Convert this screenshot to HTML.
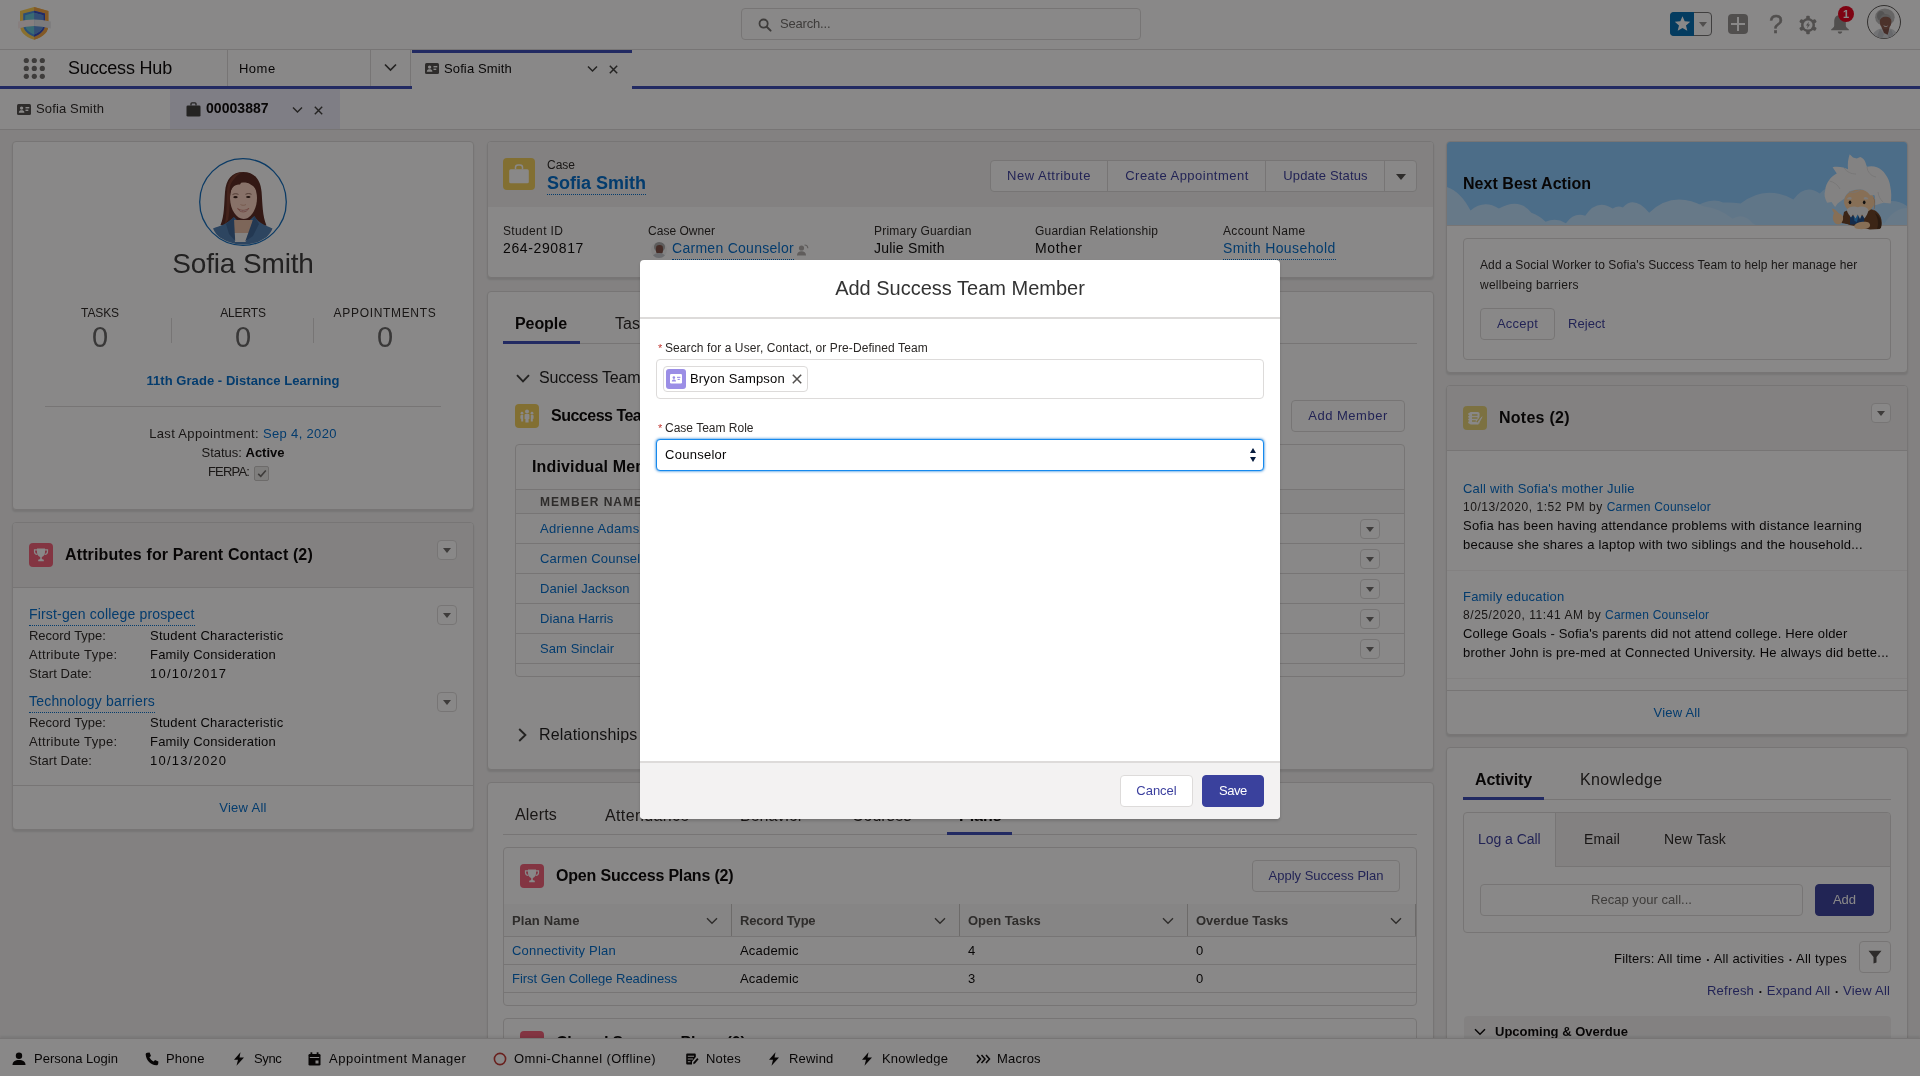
<!DOCTYPE html>
<html lang="en">
<head>
<meta charset="utf-8">
<title>Sofia Smith | Success Hub</title>
<style>
*{box-sizing:border-box;margin:0;padding:0}
html,body{width:1920px;height:1076px;overflow:hidden}
body{font-family:"Liberation Sans",sans-serif;font-size:13px;color:#080707;background:#f3f2f2;position:relative;line-height:1.2}
.a{position:absolute;white-space:nowrap}
.t{position:absolute;white-space:nowrap;line-height:1;transform:translateY(-50%);will-change:transform}
.lk{color:#006dcc}
.br{color:#3b3f9e}
.b{font-weight:bold}
.card{position:absolute;background:#fff;border:1px solid #dddbda;border-radius:4px;box-shadow:0 2px 2px rgba(0,0,0,.1)}
.hd{position:absolute;background:#f3f2f2}
.ln{position:absolute;background:#dddbda}
.btn{position:absolute;background:#fff;border:1px solid #dddbda;border-radius:4px;color:#3b3f9e;font-size:13px;text-align:center;white-space:nowrap;will-change:transform}
.dd{position:absolute;width:20px;height:20px;background:#fff;border:1px solid #dddbda;border-radius:4px}
.dd:after{content:"";position:absolute;left:5px;top:7px;border-left:4.5px solid transparent;border-right:4.5px solid transparent;border-top:5.5px solid #706e6b}
.ic{position:absolute;border-radius:4px}
.bu{font-size:8px;color:#080707;position:relative;top:-1.500px;margin:0 1px}
.dot{border-bottom:1px dotted #006dcc}
#ov{position:absolute;left:0;top:0;width:1920px;height:1076px;background:rgba(8,7,7,.48);z-index:50}
#modal{position:absolute;left:640px;top:260px;width:640px;height:559px;background:#fff;border-radius:4px;z-index:60;box-shadow:0 2px 3px rgba(0,0,0,.16)}
svg{position:absolute;overflow:visible}
</style>
</head>
<body>

<!-- ================= GLOBAL HEADER ================= -->
<div class="a" id="gh" style="left:0;top:0;width:1920px;height:50px;background:#fff;border-bottom:1px solid #dddbda"></div>
<svg style="left:18px;top:6px" width="33" height="35" viewBox="0 0 33 35">
  <path d="M16.100 0.900 L30.400 4.900 L30.400 19 C30.400 25.500 26.500 30.500 16.100 33.700 C5.700 30.500 2 25.500 2 19 L2 4.900 Z" fill="#ffd154"/>
  <path d="M16.100 0.900 L30.400 4.900 L30.400 19 C30.400 25.500 26.500 30.500 16.100 33.700 Z" fill="#f3a344"/>
  <path d="M16.100 4.700 L27 7.600 L27 19 C27 24.500 22 28.500 16.100 30.800 C10.200 28.500 5.200 24.500 5.200 19 L5.200 7.600 Z" fill="#4a90e0"/>
  <path d="M16.100 4.700 L27 7.600 L27 19 C27 24.500 22 28.500 16.100 30.800 Z" fill="#3a4bc0"/>
  <path d="M16.100 6.700 L25.300 9.200 L25.300 19 C25.300 23.500 21 26.500 16.100 28.400 C11.200 26.500 7.200 23.500 7.200 19 L7.200 9.200 Z" fill="#66c6d6"/>
  <path d="M16.100 6.700 L25.300 9.200 L25.300 19 C25.300 23.500 21 26.500 16.100 28.400 Z" fill="#5a8fd8"/>
  <path d="M0 15.400 Q8 13.600 16.100 13.400 L16.100 19.900 Q8 20.300 0 22.600 Z" fill="#fbeeee"/>
  <path d="M16.100 13.400 Q24 13.600 32.800 15.400 L32.800 22.600 Q24 20.300 16.100 19.900 Z" fill="#e6e6ea"/>
</svg>
<!-- search -->
<div class="a" style="left:741px;top:8px;width:400px;height:32px;border:1px solid #dddbda;border-radius:4px;background:#fff"></div>
<svg style="left:757.500px;top:17.500px" width="14" height="14" viewBox="0 0 14 14"><circle cx="5.6" cy="5.6" r="4.100" fill="none" stroke="#706e6b" stroke-width="1.800"/><path d="M8.700 8.700 L12.600 12.600" stroke="#706e6b" stroke-width="2" stroke-linecap="round"/></svg>
<div class="t" style="left:780px;top:23px;font-size:13px;color:#706e6b;letter-spacing:-0.19px">Search...</div>
<!-- right icons -->
<div class="a" style="left:1670px;top:12px;width:42px;height:24px;border:1px solid #747474;border-radius:4px;background:#fff"></div>
<div class="a" style="left:1670px;top:12px;width:24px;height:24px;border-radius:4px 0 0 4px;background:#006eb3"></div>
<svg style="left:1673.500px;top:15px" width="17" height="17" viewBox="0 0 18 18"><path d="M9 1.200 L11.300 6.700 L17.200 7.200 L12.700 11 L14.100 16.800 L9 13.700 L3.900 16.800 L5.300 11 L0.800 7.200 L6.700 6.700 Z" fill="#fff"/></svg>
<div class="a" style="left:1699px;top:22px;border-left:4.5px solid transparent;border-right:4.5px solid transparent;border-top:5.5px solid #959391"></div>
<div class="a" style="left:1728px;top:14px;width:20px;height:20px;border-radius:4px;background:#959391"></div>
<div class="a" style="left:1731px;top:22.750px;width:14px;height:2.500px;background:#fff"></div>
<div class="a" style="left:1736.750px;top:17px;width:2.500px;height:14px;background:#fff"></div>
<div class="t" style="left:1769px;top:24px;font-size:25px;color:#959391;-webkit-text-stroke:.5px #959391">?</div>
<svg style="left:1798px;top:15px" width="20" height="20" viewBox="0 0 20 20">
  <g fill="#959391"><circle cx="10" cy="10" r="7"/>
  <rect x="8.200" y="0.800" width="3.600" height="18.400" rx="1"/>
  <rect x="8.200" y="0.800" width="3.600" height="18.400" rx="1" transform="rotate(60 10 10)"/>
  <rect x="8.200" y="0.800" width="3.600" height="18.400" rx="1" transform="rotate(120 10 10)"/></g>
  <circle cx="10" cy="10" r="4.500" fill="#fff"/>
  <path d="M10.900 6.800 L7.900 10.600 L9.700 10.600 L9 13.400 L12.100 9.400 L10.300 9.400 Z" fill="#959391"/>
</svg>
<svg style="left:1830px;top:14px" width="20" height="22" viewBox="0 0 20 22">
  <path d="M10 1 C6.200 1 4.200 3.800 4.200 7.500 L4.200 11.500 C4.200 13.200 2.800 14.200 1.200 15.200 L1.200 16.200 L18.800 16.200 L18.800 15.200 C17.200 14.200 15.800 13.200 15.800 11.500 L15.800 7.500 C15.800 3.800 13.800 1 10 1 Z" fill="#959391"/>
  <path d="M7.800 17.600 L12.200 17.600 C12.200 19 11.200 19.800 10 19.800 C8.800 19.800 7.800 19 7.800 17.600 Z" fill="#959391"/>
</svg>
<div class="a" style="left:1838px;top:6px;width:16px;height:16px;border-radius:8px;background:#ea001e;color:#fff;font-size:11px;font-weight:bold;text-align:center;line-height:16px;will-change:transform">1</div>
<!-- user avatar -->
<svg style="left:1867px;top:5px" width="34" height="34" viewBox="0 0 34 34">
  <defs><clipPath id="cpU"><circle cx="17" cy="17" r="16.200"/></clipPath></defs>
  <circle cx="17" cy="17" r="16.500" fill="#fff" stroke="#5a5856" stroke-width="1"/>
  <g clip-path="url(#cpU)">
    <ellipse cx="17.900" cy="12.200" rx="9.800" ry="8.600" fill="#bdbdbd"/>
    <ellipse cx="14" cy="11" rx="4" ry="5" fill="#9a9a9a"/>
    <path d="M5 34 C5 27 10 24.500 14 23.500 L23 23.500 C27 24.500 31 27 31 34 Z" fill="#d4d6da"/>
    <path d="M14.500 22 L22.500 22 L21 30 L17 28 Z" fill="#7d5046"/>
    <ellipse cx="18.600" cy="16.800" rx="5.800" ry="7.400" fill="#8a5a4e"/>
    <path d="M12.800 15 C13 10.500 16 8.800 19 9.200 C22 9 24.500 11 24.400 15 C23 12.500 21 11.500 18.600 11.800 C16 11.500 14 12.800 12.800 15 Z" fill="#a9a9a9"/>
    <path d="M16.300 20.300 C17.800 21.300 19.800 21.300 21.300 20.200 C20.300 22.300 17.300 22.400 16.300 20.300 Z" fill="#f4f4f4"/>
    <path d="M13 24 L17 29 L15 34 L9 34 Z M24 24 L20.500 29.500 L22 34 L28 34 Z" fill="#bfc2c7"/>
  </g>
</svg>

<!-- ================= NAV BAR ================= -->
<div class="a" id="nav" style="left:0;top:50px;width:1920px;height:39px;background:#fff;border-bottom:3px solid #3b4bb6"></div>
<svg style="left:22px;top:56px" width="24" height="24" viewBox="0 0 24 24"><g fill="#706e6b">
<circle cx="4.300" cy="4.500" r="2.600"/><circle cx="12.300" cy="4.500" r="2.600"/><circle cx="20.300" cy="4.500" r="2.600"/>
<circle cx="4.300" cy="12.400" r="2.600"/><circle cx="12.300" cy="12.400" r="2.600"/><circle cx="20.300" cy="12.400" r="2.600"/>
<circle cx="4.300" cy="20.300" r="2.600"/><circle cx="12.300" cy="20.300" r="2.600"/><circle cx="20.300" cy="20.300" r="2.600"/></g></svg>
<div class="t" style="left:68px;top:68px;font-size:18px;letter-spacing:-0.19px">Success Hub</div>
<div class="ln" style="left:227px;top:50px;width:1px;height:36px"></div>
<div class="t" style="left:239px;top:67.5px;font-size:13px;letter-spacing:0.48px">Home</div>
<div class="ln" style="left:370px;top:49px;width:1px;height:37px"></div>
<svg style="left:384px;top:63px" width="13" height="9" viewBox="0 0 13 9"><path d="M1 1.500 L6.500 7 L12 1.500" fill="none" stroke="#3e3e3c" stroke-width="1.700"/></svg>
<div class="ln" style="left:410px;top:49px;width:1px;height:37px"></div>
<!-- active tab -->
<div class="a" style="left:411.500px;top:50px;width:220px;height:39px;background:#fff;border-top:3px solid #3b4bb6"></div>
<svg style="left:425px;top:63px" width="14" height="11" viewBox="0 0 14 11"><rect x="0" y="0" width="14" height="11" rx="1.500" fill="#514f4d"/><circle cx="4.600" cy="4.100" r="1.700" fill="#fff"/><path d="M1.800 8.800 C1.800 6.600 3.200 6.200 4.600 6.200 C6 6.200 7.400 6.600 7.400 8.800 Z" fill="#fff"/><rect x="8.500" y="3" width="3.800" height="1.400" fill="#fff"/><rect x="8.500" y="5.600" width="2.800" height="1.400" fill="#fff"/></svg>
<div class="t" style="left:444px;top:67.5px;font-size:13px;letter-spacing:0.12px">Sofia Smith</div>
<svg style="left:587px;top:65px" width="11" height="8" viewBox="0 0 11 8"><path d="M1 1.500 L5.500 6 L10 1.500" fill="none" stroke="#3e3e3c" stroke-width="1.500"/></svg>
<svg style="left:609px;top:64.500px" width="9" height="9" viewBox="0 0 9 9"><path d="M0.800 0.800 L8.200 8.200 M8.200 0.800 L0.800 8.200" stroke="#3e3e3c" stroke-width="1.500"/></svg>

<!-- ================= SUBTAB BAR ================= -->
<div class="a" style="left:0;top:89px;width:1920px;height:41px;background:#fff;border-bottom:1px solid #dddbda"></div>
<svg style="left:17px;top:104px" width="14" height="11" viewBox="0 0 14 11"><rect x="0" y="0" width="14" height="11" rx="1.500" fill="#514f4d"/><circle cx="4.600" cy="4.100" r="1.700" fill="#fff"/><path d="M1.800 8.800 C1.800 6.600 3.200 6.200 4.600 6.200 C6 6.200 7.400 6.600 7.400 8.800 Z" fill="#fff"/><rect x="8.500" y="3" width="3.800" height="1.400" fill="#fff"/><rect x="8.500" y="5.600" width="2.800" height="1.400" fill="#fff"/></svg>
<div class="t" style="left:36px;top:108px;font-size:13px;color:#2b2826;letter-spacing:0.14px">Sofia Smith</div>
<div class="a" style="left:170px;top:89px;width:170px;height:40px;background:#ecebf9"></div>
<svg style="left:186px;top:102px" width="15" height="15" viewBox="0 0 15 15"><rect x="0.500" y="3.500" width="14" height="11" rx="1.300" fill="#3e3e3c"/><path d="M5 3.500 L5 1.800 C5 1.200 5.400 0.800 6 0.800 L9 0.800 C9.600 0.800 10 1.200 10 1.800 L10 3.500" fill="none" stroke="#3e3e3c" stroke-width="1.300"/></svg>
<div class="t b" style="left:206px;top:107.500px;font-size:14px;letter-spacing:.05px">00003887</div>
<svg style="left:292px;top:106px" width="11" height="8" viewBox="0 0 11 8"><path d="M1 1.500 L5.500 6 L10 1.500" fill="none" stroke="#3e3e3c" stroke-width="1.400"/></svg>
<svg style="left:314px;top:105.500px" width="9" height="9" viewBox="0 0 9 9"><path d="M0.800 0.800 L8.200 8.200 M8.200 0.800 L0.800 8.200" stroke="#3e3e3c" stroke-width="1.400"/></svg>

<!-- ================= LEFT COLUMN ================= -->
<div class="card" style="left:12px;top:141px;width:462px;height:369px"></div>
<svg style="left:199px;top:158px" width="88" height="88" viewBox="0 0 88 88">
  <defs><clipPath id="cpA"><circle cx="44" cy="44" r="42.600"/></clipPath></defs>
  <circle cx="44" cy="44" r="43.300" fill="#fff" stroke="#0f6cbd" stroke-width="1.300"/>
  <g clip-path="url(#cpA)">
    <path d="M44.200 14 C33 14 27 21 26 34 C25 46 25.500 58 21.500 67 L33 70 L56 70 L67.500 67.500 C63.500 58 63.500 46 62.600 34 C61.500 21 55 14 44.200 14 Z" fill="#5a2a22"/>
    <path d="M44.200 14 C38 16 33 22 31.500 30 C30.500 40 31 52 29 62 L26 66 C28 56 27.500 44 28 34 C28.500 22 34 15 44.200 14 Z" fill="#7a3d2e"/>
    <path d="M14 70.500 C20 68 28 66.500 34.900 59 L44 68 L55.300 58 C60 66 68 68 73.500 70.500 C70 80 58 88 44 88 C30 88 18 80 14 70.500 Z" fill="#4f7fb3"/>
    <path d="M34.500 62 L53.800 62 L52.800 75 L44 84 L35.200 75 Z" fill="#e9bfa6"/>
    <path d="M34.900 74.900 L52.600 74.900 L46.500 84 L36 84 Z" fill="#f4f4f4"/>
    <path d="M34.900 59 L36.200 83 L30 76 L27 66 Z" fill="#3d6797"/><path d="M55.300 58 L46.200 83.500 L54 78 L60 66 Z" fill="#3d6797"/>
    <path d="M31 40 C31 28 36 24.500 44.200 24.500 C52.500 24.500 58 28 58 40 C58 52 51 61 44.500 61 C38 61 31 52 31 40 Z" fill="#fdd5c3"/>
    <path d="M31.200 38 C31.500 29 36 26 41 26.500 C44 22 44.500 20 45 17 C47 22 50 26 54 28 C57 30 58 34 58 38 C61 30 58 19 45 17.500 C33 18 29 28 31.200 38 Z" fill="#5a2a22"/>
    <ellipse cx="36.500" cy="39.200" rx="2.200" ry="1.100" fill="#3a2018"/><ellipse cx="49.300" cy="39" rx="2.200" ry="1.100" fill="#3a2018"/>
    <path d="M33.500 36.600 C35.500 35.400 37.500 35.500 39.500 36.400 M46.500 36.300 C48.500 35.300 50.500 35.300 52.500 36.300" fill="none" stroke="#6b4436" stroke-width="0.700"/>
    <path d="M41.500 46.500 C43 47.600 45.500 47.600 47 46.500" fill="none" stroke="#d9a48c" stroke-width="0.900"/>
    <path d="M38.600 50.500 C42 53 46.500 53 49.800 50.300 C47.500 55 41 55 38.600 50.500 Z" fill="#fff" stroke="#c9786c" stroke-width="0.900"/>
  </g>
</svg>
<div class="t" style="left:12px;width:462px;text-align:center;top:263.500px;font-size:28px;color:#3a3a3a;letter-spacing:-0.14px">Sofia Smith</div>
<div class="t" style="left:30px;width:140px;text-align:center;top:313px;font-size:12px;color:#2b2826;letter-spacing:-0.13px">TASKS</div>
<div class="t" style="left:173px;width:140px;text-align:center;top:313px;font-size:12px;color:#2b2826;letter-spacing:-0.14px">ALERTS</div>
<div class="t" style="left:315px;width:140px;text-align:center;top:313px;font-size:12px;color:#2b2826;letter-spacing:0.68px">APPOINTMENTS</div>
<div class="t" style="left:30px;width:140px;text-align:center;top:337px;font-size:29px;color:#666">0</div>
<div class="t" style="left:173px;width:140px;text-align:center;top:337px;font-size:29px;color:#666">0</div>
<div class="t" style="left:315px;width:140px;text-align:center;top:337px;font-size:29px;color:#666">0</div>
<div class="ln" style="left:171px;top:318px;width:1px;height:25px"></div>
<div class="ln" style="left:313px;top:318px;width:1px;height:25px"></div>
<div class="t b lk" style="left:12px;width:462px;text-align:center;top:379.5px;font-size:13px;letter-spacing:0.06px">11th Grade - Distance Learning</div>
<div class="ln" style="left:45px;top:406px;width:396px;height:1px"></div>
<div class="t" style="left:12px;width:462px;text-align:center;top:432.5px;font-size:13px;color:#2b2826;letter-spacing:0.34px">Last Appointment: <span class="lk">Sep 4, 2020</span></div>
<div class="t" style="left:12px;width:462px;text-align:center;top:451.5px;font-size:13px;color:#2b2826;letter-spacing:-0.01px">Status: <span class="b" style="color:#080707">Active</span></div>
<div class="t" style="left:208px;top:470.5px;font-size:13px;color:#2b2826;letter-spacing:-0.83px">FERPA:</div>
<div class="a" style="left:254px;top:466px;width:15px;height:15px;border:1px solid #c9c7c5;border-radius:2px;background:#ecebea"></div>
<svg style="left:257px;top:469px" width="10" height="9" viewBox="0 0 10 9"><path d="M1.200 4.800 L3.800 7.300 L8.800 1.500" fill="none" stroke="#706e6b" stroke-width="1.600"/></svg>

<div class="card" style="left:12px;top:522px;width:462px;height:308px"></div>
<div class="hd" style="left:13px;top:523px;width:460px;height:65px;border-radius:3px 3px 0 0;border-bottom:1px solid #dddbda"></div>
<div class="ic" style="left:29px;top:543px;width:24px;height:24px;background:#f3607a"></div>
<svg style="left:33px;top:547px" width="16" height="16" viewBox="0 0 16 16"><path d="M4 1.500 L12 1.500 L12 5.500 C12 8 10.200 9.600 8.800 9.900 L8.800 12 L10.800 12.800 L10.800 14.200 L5.200 14.200 L5.200 12.800 L7.200 12 L7.200 9.900 C5.800 9.600 4 8 4 5.500 Z" fill="#fff"/><path d="M4 2.800 L1.500 2.800 L1.500 4.500 C1.500 6.200 2.600 7.300 4.300 7.500 M12 2.800 L14.500 2.800 L14.500 4.500 C14.500 6.200 13.400 7.300 11.700 7.500" fill="none" stroke="#fff" stroke-width="1.200"/></svg>
<div class="t b" style="left:65px;top:554.500px;font-size:16px;letter-spacing:0.13px">Attributes for Parent Contact (2)</div>
<div class="dd" style="left:437px;top:540px"></div>

<div class="t lk" style="left:29px;top:613.5px;font-size:14px;letter-spacing:0.17px"><span class="dot" style="padding-bottom:3px">First-gen college prospect</span></div>
<div class="dd" style="left:437px;top:605px"></div>
<div class="t" style="left:29px;top:634.5px;color:#2b2826;letter-spacing:-0.02px">Record Type:</div><div class="t" style="left:150px;top:634.5px;letter-spacing:0.25px">Student Characteristic</div>
<div class="t" style="left:29px;top:653.5px;color:#2b2826;letter-spacing:0.33px">Attribute Type:</div><div class="t" style="left:150px;top:653.5px;letter-spacing:0.19px">Family Consideration</div>
<div class="t" style="left:29px;top:672.5px;color:#2b2826;letter-spacing:0.08px">Start Date:</div><div class="t" style="left:150px;top:672.5px;letter-spacing:1.22px">10/10/2017</div>
<div class="t lk" style="left:29px;top:700.5px;font-size:14px;letter-spacing:.2px"><span class="dot" style="padding-bottom:3px">Technology barriers</span></div>
<div class="dd" style="left:437px;top:692px"></div>
<div class="t" style="left:29px;top:721.5px;color:#2b2826;letter-spacing:-0.02px">Record Type:</div><div class="t" style="left:150px;top:721.5px;letter-spacing:0.25px">Student Characteristic</div>
<div class="t" style="left:29px;top:740.5px;color:#2b2826;letter-spacing:0.33px">Attribute Type:</div><div class="t" style="left:150px;top:740.5px;letter-spacing:0.19px">Family Consideration</div>
<div class="t" style="left:29px;top:759.5px;color:#2b2826;letter-spacing:0.08px">Start Date:</div><div class="t" style="left:150px;top:759.5px;letter-spacing:1.22px">10/13/2020</div>
<div class="ln" style="left:13px;top:785px;width:460px;height:1px"></div>
<div class="t lk" style="left:12px;width:462px;text-align:center;top:806.5px;letter-spacing:0.29px">View All</div>

<!-- ================= MIDDLE COLUMN ================= -->
<!-- case header card -->
<div class="card" style="left:487px;top:141px;width:947px;height:137px"></div>
<div class="hd" style="left:488px;top:142px;width:945px;height:65px;border-radius:3px 3px 0 0"></div>
<div class="ic" style="left:503px;top:158px;width:32px;height:32px;background:#f2cf5b"></div>
<svg style="left:509px;top:163px" width="20" height="21" viewBox="0 0 20 21"><rect x="0.200" y="6.300" width="19.600" height="14" rx="1.500" fill="#fff"/><path d="M6.500 6.300 L6.500 4.200 C6.500 2.800 7.600 1.900 9 1.900 L11 1.900 C12.400 1.900 13.500 2.800 13.500 4.200 L13.500 6.300" fill="none" stroke="#fff" stroke-width="1.500"/></svg>
<div class="t" style="left:547px;top:165px;color:#2b2826;font-size:12px;letter-spacing:-0px">Case</div>
<div class="t b lk" style="left:547px;top:183px;font-size:18px"><span class="dot" style="padding-bottom:1px">Sofia Smith</span></div>
<div class="a" style="left:990px;top:160px;width:427px;height:32px;border:1px solid #dddbda;border-radius:4px;background:#fff"></div>
<div class="ln" style="left:1107px;top:160px;width:1px;height:32px"></div>
<div class="ln" style="left:1265px;top:160px;width:1px;height:32px"></div>
<div class="ln" style="left:1384px;top:160px;width:1px;height:32px"></div>
<div class="t br" style="left:990px;width:118px;text-align:center;top:175px;letter-spacing:0.51px">New Attribute</div>
<div class="t br" style="left:1108px;width:158px;text-align:center;top:175px;letter-spacing:0.48px">Create Appointment</div>
<div class="t br" style="left:1266px;width:119px;text-align:center;top:175px;letter-spacing:0.16px">Update Status</div>
<div class="a" style="left:1396px;top:174px;border-left:5px solid transparent;border-right:5px solid transparent;border-top:6px solid #514f4d"></div>
<div class="t" style="left:503px;top:231px;color:#2b2826;font-size:12px;letter-spacing:0.35px">Student ID</div>
<div class="t" style="left:503px;top:247.5px;font-size:14px;letter-spacing:0.62px">264-290817</div>
<div class="t" style="left:648px;top:231px;color:#2b2826;font-size:12px;letter-spacing:0.03px">Case Owner</div>
<div class="a" style="left:651px;top:242px;width:16px;height:16px;border-radius:8px;overflow:hidden;background:#f4f4f4"><div class="a" style="left:2.500px;top:0px;width:11px;height:10px;border-radius:5px;background:#ababab"></div><div class="a" style="left:5px;top:3px;width:6.500px;height:8.500px;border-radius:3.200px;background:#7d5046"></div><div class="a" style="left:1px;top:11px;width:14px;height:8px;border-radius:6px 6px 0 0;background:#c4c8cd"></div></div>
<div class="t lk" style="left:672px;top:247.5px;font-size:14px;letter-spacing:0.28px"><span class="dot" style="padding-bottom:3px">Carmen Counselor</span></div>
<svg style="left:796px;top:243px" width="13" height="13" viewBox="0 0 13 13"><circle cx="5.500" cy="5" r="2.600" fill="#b0adab"/><path d="M1 12.500 C1 9.500 3 8.300 5.500 8.300 C8 8.300 10 9.500 10 12.500 Z" fill="#b0adab"/><path d="M8.500 2 C10.500 2 11.800 3.300 11.800 5.200" fill="none" stroke="#b0adab" stroke-width="1.200"/></svg>
<div class="t" style="left:874px;top:231px;color:#2b2826;font-size:12px;letter-spacing:0.22px">Primary Guardian</div>
<div class="t" style="left:874px;top:247.5px;font-size:14px;letter-spacing:.2px">Julie Smith</div>
<div class="t" style="left:1035px;top:231px;color:#2b2826;font-size:12px;letter-spacing:0.21px">Guardian Relationship</div>
<div class="t" style="left:1035px;top:247.5px;font-size:14px;letter-spacing:0.65px">Mother</div>
<div class="t" style="left:1223px;top:231px;color:#2b2826;font-size:12px;letter-spacing:0.32px">Account Name</div>
<div class="t lk" style="left:1223px;top:247.5px;font-size:14px;letter-spacing:0.41px"><span class="dot" style="padding-bottom:3px">Smith Household</span></div>

<!-- people card -->
<div class="card" style="left:487px;top:291px;width:947px;height:479px"></div>
<div class="t b" style="left:515px;top:324px;font-size:16px;letter-spacing:-0.08px">People</div>
<div class="t" style="left:615px;top:324px;font-size:16px;color:#2b2826">Tasks</div>
<div class="ln" style="left:503px;top:343px;width:914px;height:1px"></div>
<div class="a" style="left:503px;top:340.500px;width:77px;height:3px;background:#3b4bb6"></div>
<svg style="left:516px;top:374px" width="14" height="9" viewBox="0 0 14 9"><path d="M1 1.200 L7 7.400 L13 1.200" fill="none" stroke="#3e3e3c" stroke-width="1.900"/></svg>
<div class="t" style="left:539px;top:378px;font-size:16px;color:#1c1c1c;letter-spacing:-.2px">Success Team</div>
<div class="ic" style="left:515px;top:404px;width:24px;height:24px;background:#f2cf5b"></div>
<svg style="left:519px;top:408px" width="16" height="16" viewBox="0 0 16 16"><g fill="#fff"><circle cx="8" cy="3.600" r="2"/><path d="M5.600 7 C5.600 6.300 6.200 6 6.800 6 L9.200 6 C9.800 6 10.400 6.300 10.400 7 L10.400 11 L9.600 11 L9.600 14.500 L6.400 14.500 L6.400 11 L5.600 11 Z"/><circle cx="3" cy="5.200" r="1.400"/><path d="M1.400 7.800 C1.400 7.300 1.800 7 2.300 7 L4.200 7 L4.200 13.500 L2.200 13.500 L2.200 10.800 L1.400 10.800 Z"/><circle cx="13" cy="5.200" r="1.400"/><path d="M14.600 7.800 C14.600 7.300 14.200 7 13.700 7 L11.800 7 L11.800 13.500 L13.800 13.500 L13.800 10.800 L14.600 10.800 Z"/></g></svg>
<div class="t b" style="left:551px;top:416px;font-size:16px;letter-spacing:-0.5px">Success Team Members (5)</div>
<div class="btn" style="left:1291px;top:400px;width:114px;height:32px;line-height:30px;letter-spacing:0.52px">Add Member</div>
<div class="a" style="left:515px;top:444px;width:890px;height:233px;border:1px solid #dddbda;border-radius:4px;background:#fff"></div>
<div class="t b" style="left:532px;top:467px;font-size:16px;letter-spacing:0.15px">Individual Members</div>
<div class="a" style="left:516px;top:489px;width:888px;height:25px;background:#fafaf9;border-top:1px solid #dddbda;border-bottom:1px solid #dddbda"></div>
<div class="t b" style="left:540px;top:502px;font-size:12px;letter-spacing:1px;color:#514f4d">MEMBER NAME</div>
<div class="ln" style="left:516px;top:543px;width:888px;height:1px"></div>
<div class="ln" style="left:516px;top:573px;width:888px;height:1px"></div>
<div class="ln" style="left:516px;top:603px;width:888px;height:1px"></div>
<div class="ln" style="left:516px;top:633px;width:888px;height:1px"></div>
<div class="ln" style="left:516px;top:663px;width:888px;height:1px"></div>
<div class="t lk" style="left:540px;top:528px;letter-spacing:0.29px">Adrienne Adams</div><div class="dd" style="left:1360px;top:519px"></div>
<div class="t lk" style="left:540px;top:558px;letter-spacing:.2px">Carmen Counselor</div><div class="dd" style="left:1360px;top:549px"></div>
<div class="t lk" style="left:540px;top:588px;letter-spacing:0.1px">Daniel Jackson</div><div class="dd" style="left:1360px;top:579px"></div>
<div class="t lk" style="left:540px;top:618px;letter-spacing:0.1px">Diana Harris</div><div class="dd" style="left:1360px;top:609px"></div>
<div class="t lk" style="left:540px;top:648px;letter-spacing:0.09px">Sam Sinclair</div><div class="dd" style="left:1360px;top:639px"></div>
<svg style="left:518px;top:728px" width="9" height="14" viewBox="0 0 9 14"><path d="M1.200 1 L7.400 7 L1.200 13" fill="none" stroke="#3e3e3c" stroke-width="1.900"/></svg>
<div class="t" style="left:539px;top:735px;font-size:16px;color:#1c1c1c;letter-spacing:0.19px">Relationships</div>

<!-- plans card -->
<div class="card" style="left:487px;top:782px;width:947px;height:330px"></div>
<div class="t" style="left:515px;top:815px;font-size:16px;color:#2b2826;letter-spacing:0.18px">Alerts</div>
<div class="t" style="left:605px;top:815.500px;font-size:16px;color:#2b2826;letter-spacing:.36px">Attendance</div>
<div class="t" style="left:739.500px;top:815.500px;font-size:16px;color:#2b2826">Behavior</div>
<div class="t" style="left:852px;top:815.500px;font-size:16px;color:#2b2826">Courses</div>
<div class="t b" style="left:959px;top:815.500px;font-size:16px">Plans</div>
<div class="ln" style="left:503px;top:834px;width:914px;height:1px"></div>
<div class="a" style="left:947px;top:831.500px;width:65px;height:3px;background:#3b4bb6"></div>
<div class="a" style="left:503px;top:847px;width:914px;height:159px;border:1px solid #dddbda;border-radius:4px;background:#fff"></div>
<div class="ic" style="left:520px;top:864px;width:24px;height:24px;background:#f3607a"></div>
<svg style="left:524px;top:868px" width="16" height="16" viewBox="0 0 16 16"><path d="M4 1.500 L12 1.500 L12 5.500 C12 8 10.200 9.600 8.800 9.900 L8.800 12 L10.800 12.800 L10.800 14.200 L5.200 14.200 L5.200 12.800 L7.200 12 L7.200 9.900 C5.800 9.600 4 8 4 5.500 Z" fill="#fff"/><path d="M4 2.800 L1.500 2.800 L1.500 4.500 C1.500 6.200 2.600 7.300 4.300 7.500 M12 2.800 L14.500 2.800 L14.500 4.500 C14.500 6.200 13.400 7.300 11.700 7.500" fill="none" stroke="#fff" stroke-width="1.200"/></svg>
<div class="t b" style="left:556px;top:876px;font-size:16px;letter-spacing:-0.18px">Open Success Plans (2)</div>
<div class="btn" style="left:1252px;top:860px;width:148px;height:32px;line-height:30px">Apply Success Plan</div>
<div class="a" style="left:504px;top:904px;width:912px;height:33px;background:#fafaf9;border-bottom:1px solid #dddbda"></div>
<div class="a" style="left:731px;top:904px;width:1px;height:32px;background:#c9c7c5"></div>
<div class="a" style="left:959px;top:904px;width:1px;height:32px;background:#c9c7c5"></div>
<div class="a" style="left:1187px;top:904px;width:1px;height:32px;background:#c9c7c5"></div>
<div class="a" style="left:1415px;top:904px;width:1px;height:32px;background:#c9c7c5"></div>
<div class="t b" style="left:512px;top:920px;color:#514f4d;letter-spacing:0.12px">Plan Name</div>
<div class="t b" style="left:740px;top:920px;color:#514f4d;letter-spacing:-0.22px">Record Type</div>
<div class="t b" style="left:968px;top:920px;color:#514f4d">Open Tasks</div>
<div class="t b" style="left:1196px;top:920px;color:#514f4d">Overdue Tasks</div>
<svg style="left:706px;top:917px" width="12" height="8" viewBox="0 0 12 8"><path d="M1 1.300 L6 6.300 L11 1.300" fill="none" stroke="#514f4d" stroke-width="1.400"/></svg>
<svg style="left:934px;top:917px" width="12" height="8" viewBox="0 0 12 8"><path d="M1 1.300 L6 6.300 L11 1.300" fill="none" stroke="#514f4d" stroke-width="1.400"/></svg>
<svg style="left:1162px;top:917px" width="12" height="8" viewBox="0 0 12 8"><path d="M1 1.300 L6 6.300 L11 1.300" fill="none" stroke="#514f4d" stroke-width="1.400"/></svg>
<svg style="left:1390px;top:917px" width="12" height="8" viewBox="0 0 12 8"><path d="M1 1.300 L6 6.300 L11 1.300" fill="none" stroke="#514f4d" stroke-width="1.400"/></svg>
<div class="ln" style="left:504px;top:964px;width:912px;height:1px"></div>
<div class="ln" style="left:504px;top:992px;width:912px;height:1px"></div>
<div class="t lk" style="left:512px;top:950px;letter-spacing:.2px">Connectivity Plan</div>
<div class="t" style="left:740px;top:950px;letter-spacing:.2px">Academic</div>
<div class="t" style="left:968px;top:950px;letter-spacing:.2px">4</div>
<div class="t" style="left:1196px;top:950px;letter-spacing:.2px">0</div>
<div class="t lk" style="left:512px;top:978px;letter-spacing:-0.04px">First Gen College Readiness</div>
<div class="t" style="left:740px;top:978px;letter-spacing:.2px">Academic</div>
<div class="t" style="left:968px;top:978px;letter-spacing:.2px">3</div>
<div class="t" style="left:1196px;top:978px;letter-spacing:.2px">0</div>
<div class="a" style="left:503px;top:1018px;width:914px;height:80px;border:1px solid #dddbda;border-radius:4px;background:#fff"></div>
<div class="ic" style="left:520px;top:1031px;width:24px;height:24px;background:#f3607a"></div>
<div class="t b" style="left:556px;top:1043px;font-size:16px;letter-spacing:-0.18px">Closed Success Plans (0)</div>

<!-- ================= RIGHT COLUMN ================= -->
<!-- next best action -->
<div class="card" style="left:1446px;top:141px;width:462px;height:232px"></div>
<div class="a" style="left:1447px;top:142px;width:460px;height:84px;background:#8acbff;border-radius:3px 3px 0 0;overflow:hidden;border-bottom:1px solid #dddbda">
  <svg style="left:0;top:0" width="460" height="84" viewBox="0 0 460 84">
    <path d="M240 84 L240 70 Q262 54 276 60.500 Q285 60 293.600 61.500 Q318 42 346.400 57.500 Q358 41 372.800 51.400 Q384 40 398 49 Q420 40 432 62 Q447 55 460 64 L460 84 Z" fill="#b1dcff"/>
    <path d="M0 84 L0 45 Q14 50 23.500 68.600 Q37 57 51.900 66.600 Q72 55 84.400 70.700 Q93 74 98.600 79.800 Q108.800 75 118.900 81.200 Q127 70 138.200 73.700 Q150 56 165.700 66.600 Q171 63 175.800 65.600 Q187 53 202.200 70.700 Q226 48 257.100 64.600 Q272 66 285.500 76.800 Q296 70 305.800 81.200 L310 84 Z" fill="#bee2ff"/>
    <path d="M395 84 Q400 70 420 66 L440 84 Z M436 84 Q446 66 460 66 L460 84 Z" fill="#bee2ff"/>
  </svg>
</div>
<div class="t b" style="left:1463px;top:184px;font-size:16px;letter-spacing:0.04px">Next Best Action</div>
<svg style="left:1820px;top:150px" width="80" height="84" viewBox="0 0 80 84">
  <path d="M24 62 C30 58 52 57 57 62 C62 66 63 74 60 79 L50 79.500 L30 75 L22 72 Z" fill="#6b4226"/>
  <path d="M55 63 C60 66 62.500 72 61 78 L57 79 C59 74 58 68 55 63 Z" fill="#4a2d19"/>
  <path d="M29.500 66 L44.500 66 L44 74.500 L30 74.500 Z" fill="#1f4f8c"/>
  <path d="M33.500 65 L38.500 65 L37 72 L34.500 71 Z" fill="#2a8fe0"/>
  <ellipse cx="39.300" cy="51.500" rx="15.300" ry="12" fill="#fbcf9f"/>
  <path d="M53 47 C56 50 56 58 53 61 C55 57 55 51 53 47 Z" fill="#e0a673"/>
  <path d="M7.100 52.700 C4.500 48 4 44 5.100 41 C5.500 36 7 33 9.200 30.100 C11 27 14 25 16.800 23.400 L12.600 17.200 C16 16.500 20 16.800 23.400 17.600 L28 19.200 C27.500 14 28 9 29.700 4.200 L33 7.500 L36.800 8.400 L40.200 7.100 C42.500 8 44 9.500 45.200 11.700 L46.900 16.700 C50 15.800 54 16 56.900 17.200 C60.500 18.800 63.500 21 65.300 24.300 C68 28 69.800 32 70.300 36.800 C71.500 42 71.500 48 70.700 53.500 L63.600 52.700 L55.200 55.200 C55.500 51 55.200 48 54.400 45.200 L50.200 45.200 C47.500 41.500 44 39.800 40.200 39.300 C36 39.500 32 40.500 29.300 41.800 C27 43.500 25.300 46 24.300 48.500 L17.600 53.500 L15.100 56.900 L11.500 52 Z" fill="#f4f4f4"/>
  <path d="M29 41.500 C33 43 37 42.500 40.500 39.500 M47 17 C47.500 22 51 26 56 27 M24 18 C27 22 31 24 36 24 M9.500 31 C14 32 18 35 20 39 M63 52 C60 49 58.500 46 58 42" fill="none" stroke="#d9d9d9" stroke-width="0.800"/>
  <path d="M26.800 49.300 C28 46.800 30.500 46.500 31.800 48 L31 49.500 Z M43.500 48 C45 46.500 47.500 46.800 48.500 49.300 L44.500 49.500 Z" fill="#e6e6e6"/>
  <ellipse cx="30" cy="52.300" rx="1.300" ry="1.900" fill="#1a1a1a"/><ellipse cx="44.200" cy="52.300" rx="1.300" ry="1.900" fill="#1a1a1a"/>
  <path d="M26.800 60 C29 56.500 34 56 37.700 57.200 C41.500 56 46.500 56.500 48.500 60 C48 63 46.500 66 44.500 68.600 L42 64.500 L40 69 L37.700 64.500 L35.500 68.600 L33 64.500 L31 67.500 C29 65 27.300 62.500 26.800 60 Z" fill="#ececec"/>
  <path d="M12.200 58.500 C14 58.500 17 61 19 63.500 C21 64 23 65.500 23.400 68 C23.500 71 21.500 74 18.500 74.400 C15.500 74.400 13.300 72 13 69 C12.500 66.500 13.200 64.500 14.200 63 C13 61.500 12 60 12.200 58.500 Z" fill="#fbcf9f"/>
  <path d="M23 66 C26 64.500 28.500 64.500 30 66 L30 74.500 L21.500 73 C23 71 23.500 68.500 23 66 Z" fill="#6b4226"/>
  <path d="M34.300 75.500 C36 72.500 42 71.200 47 72 C50 72.500 51 75.500 49 77.500 C46 79.500 39 79.500 36 78.500 C34.500 78 34 76.500 34.300 75.500 Z" fill="#fbcf9f"/>
</svg>
<div class="a" style="left:1463px;top:238px;width:428px;height:122px;border:1px solid #dddbda;border-radius:4px;background:#fff"></div>
<div class="t" style="left:1480px;top:265px;color:#2b2826;font-size:12px;letter-spacing:0.11px">Add a Social Worker to Sofia's Success Team to help her manage her</div>
<div class="t" style="left:1480px;top:285px;color:#2b2826;font-size:12px;letter-spacing:0.26px">wellbeing barriers</div>
<div class="btn" style="left:1480px;top:308px;width:75px;height:32px;line-height:29px;font-size:13px;letter-spacing:0.21px">Accept</div>
<div class="t br" style="left:1568px;top:322.800px;font-size:13px;letter-spacing:0.07px">Reject</div>

<!-- notes -->
<div class="card" style="left:1446px;top:385px;width:462px;height:350px"></div>
<div class="hd" style="left:1447px;top:386px;width:460px;height:65px;border-radius:3px 3px 0 0;border-bottom:1px solid #dddbda"></div>
<div class="ic" style="left:1463px;top:406px;width:24px;height:24px;background:#e6d478"></div>
<svg style="left:1463px;top:406px" width="24" height="24" viewBox="0 0 24 24"><g fill="#fff"><rect x="6.200" y="6" width="10.300" height="12.400" rx="1.600"/><circle cx="6.200" cy="8" r="1.100"/><circle cx="6.200" cy="10.800" r="1.100"/><circle cx="6.200" cy="13.600" r="1.100"/><circle cx="6.200" cy="16.400" r="1.100"/></g><g stroke="#e6d478" stroke-width="1.300"><path d="M9 9 L14.500 9 M9 12 L14.500 12 M9 15 L12.800 15"/><path d="M19.200 10.600 L14.600 16.800" stroke-width="3.400"/></g><path d="M19 10.800 L15 16.200 L14.200 17.800 L15.800 17 Z" fill="#fff" stroke="#fff" stroke-width="0.900" stroke-linejoin="round"/></svg>
<div class="t b" style="left:1499px;top:418px;font-size:16px;letter-spacing:0.26px">Notes (2)</div>
<div class="dd" style="left:1871px;top:403px"></div>
<div class="t lk" style="left:1463px;top:488px;letter-spacing:.2px">Call with Sofia's mother Julie</div>
<div class="t" style="left:1463px;top:506.500px;color:#2b2826;font-size:12px"><span style="letter-spacing:.56px">10/13/2020, 1:52 PM by </span><span class="lk" style="letter-spacing:.22px">Carmen Counselor</span></div>
<div class="t" style="left:1463px;top:524.500px;letter-spacing:0.26px">Sofia has been having attendance problems with distance learning</div>
<div class="t" style="left:1463px;top:543.500px;letter-spacing:0.22px">because she shares a laptop with two siblings and the household...</div>
<div class="a" style="left:1447px;top:570px;width:460px;height:1px;background:#f3f2f2"></div>
<div class="t lk" style="left:1463px;top:596px;letter-spacing:.2px">Family education</div>
<div class="t" style="left:1463px;top:614.500px;color:#2b2826;font-size:12px"><span style="letter-spacing:.56px">8/25/2020, 11:41 AM by </span><span class="lk" style="letter-spacing:.22px">Carmen Counselor</span></div>
<div class="t" style="left:1463px;top:632.500px;letter-spacing:0.16px">College Goals - Sofia's parents did not attend college. Here older</div>
<div class="t" style="left:1463px;top:651.500px;letter-spacing:0.22px">brother John is pre-med at Connected University. He always did bette...</div>
<div class="a" style="left:1447px;top:678px;width:460px;height:1px;background:#f3f2f2"></div>
<div class="ln" style="left:1447px;top:690px;width:460px;height:1px"></div>
<div class="t lk" style="left:1446px;width:462px;text-align:center;top:712px;letter-spacing:.2px">View All</div>

<!-- activity -->
<div class="card" style="left:1446px;top:747px;width:462px;height:380px"></div>
<div class="t b" style="left:1475px;top:780px;font-size:16px;letter-spacing:-0.1px">Activity</div>
<div class="t" style="left:1580px;top:780px;font-size:16px;color:#2b2826;letter-spacing:0.36px">Knowledge</div>
<div class="ln" style="left:1463px;top:799px;width:428px;height:1px"></div>
<div class="a" style="left:1463px;top:796.500px;width:81px;height:3px;background:#3b4bb6"></div>
<div class="a" style="left:1463px;top:812px;width:428px;height:121px;border:1px solid #dddbda;border-radius:4px;background:#fff"></div>
<div class="a" style="left:1555px;top:813px;width:335px;height:54px;background:#f3f2f2;border-left:1px solid #dddbda;border-bottom:1px solid #dddbda;border-radius:0 3px 0 0"></div>
<div class="t br" style="left:1478px;top:839px;font-size:14px;letter-spacing:-0.04px">Log a Call</div>
<div class="t" style="left:1584px;top:839px;font-size:14px;color:#2b2826;letter-spacing:.2px">Email</div>
<div class="t" style="left:1664px;top:839px;font-size:14px;color:#2b2826;letter-spacing:.2px">New Task</div>
<div class="a" style="left:1480px;top:884px;width:323px;height:32px;border:1px solid #dddbda;border-radius:4px;background:#fff"></div>
<div class="t" style="left:1480px;width:323px;text-align:center;top:899px;color:#706e6b;letter-spacing:0.03px">Recap your call...</div>
<div class="btn" style="left:1815px;top:884px;width:59px;height:32px;line-height:30px;background:#3a419d;border-color:#3a419d;color:#fff">Add</div>
<div class="t" style="right:73px;top:958px;letter-spacing:0.19px">Filters: All time <span class="bu">•</span> All activities <span class="bu">•</span> All types</div>
<div class="a" style="left:1859px;top:941px;width:32px;height:32px;border:1px solid #dddbda;border-radius:4px;background:#fff"></div>
<svg style="left:1868px;top:950px" width="14" height="14" viewBox="0 0 14 14"><path d="M0.500 0.800 L13.500 0.800 L8.500 7 L8.500 12.500 L5.500 13.500 L5.500 7 Z" fill="#514f4d"/></svg>
<div class="t br" style="right:30px;top:990px;letter-spacing:0.22px">Refresh <span class="bu">•</span> Expand All <span class="bu">•</span> View All</div>
<div class="a" style="left:1464px;top:1016px;width:427px;height:40px;background:#f3f2f2;border-radius:4px"></div>
<svg style="left:1474px;top:1028px" width="12" height="8" viewBox="0 0 12 8"><path d="M1 1.300 L6 6.300 L11 1.300" fill="none" stroke="#080707" stroke-width="1.500"/></svg>
<div class="t b" style="left:1495px;top:1031px;letter-spacing:0px">Upcoming &amp; Overdue</div>

<!-- ================= UTILITY BAR ================= -->
<div class="a" style="left:0;top:1038px;width:1920px;height:38px;background:#fff;border-top:1px solid #dddbda;box-shadow:0 -2px 2px rgba(0,0,0,.07)"></div>
<svg style="left:12px;top:1052px" width="14" height="14" viewBox="0 0 14 14"><circle cx="7" cy="3.800" r="3.200" fill="#080707"/><path d="M0.500 13 C0.500 9.500 3 8 7 8 C11 8 13.500 9.500 13.500 13 Z" fill="#080707"/></svg>
<div class="t" style="left:34px;top:1058px;letter-spacing:0.01px">Persona Login</div>
<svg style="left:145px;top:1052px" width="14" height="14" viewBox="0 0 14 14"><path d="M2.200 0.800 L4.600 0.600 L6 4 L4.400 5.300 C5.200 7.200 6.800 8.800 8.700 9.600 L10 8 L13.400 9.400 L13.200 11.800 C13.100 12.800 12.300 13.400 11.300 13.300 C5.600 12.700 1.300 8.400 0.700 2.700 C0.600 1.700 1.200 0.900 2.200 0.800 Z" fill="#080707"/></svg>
<div class="t" style="left:166px;top:1058px;letter-spacing:.2px">Phone</div>
<svg style="left:233px;top:1052px" width="12" height="14" viewBox="0 0 12 14"><path d="M7.500 0.300 L1 7.800 L5 7.800 L3.500 13.700 L11 5.600 L6.500 5.600 Z" fill="#080707"/></svg>
<div class="t" style="left:254px;top:1058px;letter-spacing:-0.35px">Sync</div>
<svg style="left:308px;top:1052px" width="13" height="14" viewBox="0 0 13 14"><rect x="0.500" y="2" width="12" height="11.500" rx="1.300" fill="#080707"/><rect x="2.500" y="0.300" width="1.800" height="3" fill="#080707"/><rect x="8.700" y="0.300" width="1.800" height="3" fill="#080707"/><rect x="1.800" y="5" width="9.400" height="1" fill="#fff"/><rect x="7.500" y="8.500" width="3" height="3" fill="#fff"/></svg>
<div class="t" style="left:329px;top:1058px;letter-spacing:0.5px">Appointment Manager</div>
<svg style="left:493px;top:1052px" width="14" height="14" viewBox="0 0 14 14"><circle cx="7" cy="7" r="5.600" fill="none" stroke="#c23934" stroke-width="1.600"/></svg>
<div class="t" style="left:514px;top:1058px;letter-spacing:0.39px">Omni-Channel (Offline)</div>
<svg style="left:685px;top:1052px" width="14" height="14" viewBox="0 0 14 14"><path d="M2.500 1.500 L9.500 1.500 C10.300 1.500 10.800 2 10.800 2.800 L10.800 5 L7 9.500 L7 12.500 L2.500 12.500 C1.700 12.500 1.200 12 1.200 11.200 L1.200 2.800 C1.200 2 1.700 1.500 2.500 1.500 Z" fill="#080707"/><path d="M8.300 12.300 L8.600 10.300 L12.200 6 L13.600 7.200 L10 11.500 Z" fill="#080707"/><g stroke="#fff" stroke-width="1.100"><path d="M2.800 4.200 L9 4.200 M2.800 7 L8 7 M2.800 9.800 L5.500 9.800"/></g></svg>
<div class="t" style="left:706px;top:1058px;letter-spacing:.2px">Notes</div>
<svg style="left:768px;top:1052px" width="12" height="14" viewBox="0 0 12 14"><path d="M7.500 0.300 L1 7.800 L5 7.800 L3.500 13.700 L11 5.600 L6.500 5.600 Z" fill="#080707"/></svg>
<div class="t" style="left:789px;top:1058px;letter-spacing:.2px">Rewind</div>
<svg style="left:861px;top:1052px" width="12" height="14" viewBox="0 0 12 14"><path d="M7.500 0.300 L1 7.800 L5 7.800 L3.500 13.700 L11 5.600 L6.500 5.600 Z" fill="#080707"/></svg>
<div class="t" style="left:882px;top:1058px;letter-spacing:.2px">Knowledge</div>
<svg style="left:976px;top:1054px" width="14" height="10" viewBox="0 0 14 10"><path d="M1 1 L4.500 5 L1 9 M5.500 1 L9 5 L5.500 9 M10 1 L13.500 5 L10 9" fill="none" stroke="#080707" stroke-width="1.500"/></svg>
<div class="t" style="left:997px;top:1058px;letter-spacing:.2px">Macros</div>


<!-- ================= OVERLAY + MODAL ================= -->
<div id="ov"></div>
<div id="modal">
  <div class="t" style="left:0;width:640px;text-align:center;top:28px;font-size:20px;color:#333">Add Success Team Member</div>
  <div class="a" style="left:0;top:57px;width:640px;height:2px;background:#dddbda"></div>
  <div class="t" style="left:18px;top:87.500px;font-size:11px;color:#c23934">*</div>
  <div class="t" style="left:25px;top:88px;font-size:12px;color:#2b2826;letter-spacing:0.09px">Search for a User, Contact, or Pre-Defined Team</div>
  <div class="a" style="left:16px;top:99px;width:608px;height:40px;border:1px solid #dddbda;border-radius:4px;background:#fff"></div>
  <div class="a" style="left:23px;top:106px;width:145px;height:26px;border:1px solid #dddbda;border-radius:4px;background:#fff"></div>
  <div class="ic" style="left:26px;top:109px;width:20px;height:20px;background:#9b8ee6;border-radius:3px"></div>
  <svg style="left:30px;top:114px" width="12" height="10" viewBox="0 0 12 10"><rect x="0" y="0" width="12" height="9.500" rx="1.200" fill="#fff"/><circle cx="3.900" cy="3.600" r="1.300" fill="#9b8ee6"/><path d="M1.800 7.500 C1.800 5.800 2.800 5.400 3.900 5.400 C5 5.400 6 5.800 6 7.500 Z" fill="#9b8ee6"/><rect x="7" y="2.800" width="3.400" height="1.100" fill="#9b8ee6"/><rect x="7.600" y="4.900" width="2.200" height="1.100" fill="#9b8ee6"/></svg>
  <div class="t" style="left:50px;top:118px;font-size:13px;letter-spacing:0.18px">Bryon Sampson</div>
  <svg style="left:152px;top:114px" width="10" height="10" viewBox="0 0 10 10"><path d="M0.800 0.800 L9.200 9.200 M9.200 0.800 L0.800 9.200" stroke="#514f4d" stroke-width="1.500"/></svg>
  <div class="t" style="left:18px;top:167.500px;font-size:11px;color:#c23934">*</div>
  <div class="t" style="left:25px;top:168px;font-size:12px;color:#2b2826">Case Team Role</div>
  <div class="a" style="left:16px;top:179px;width:608px;height:32px;border:1px solid #1589ee;border-radius:4px;background:#fff;box-shadow:0 0 3px #0070d2"></div>
  <div class="t" style="left:25px;top:194px;font-size:13px;letter-spacing:0.27px">Counselor</div>
  <div class="a" style="left:609.500px;top:187.500px;border-left:3.300px solid transparent;border-right:3.300px solid transparent;border-bottom:5px solid #061c3f"></div>
  <div class="a" style="left:609.500px;top:197px;border-left:3.300px solid transparent;border-right:3.300px solid transparent;border-top:5px solid #061c3f"></div>
  <div class="a" style="left:0;top:501px;width:640px;height:58px;background:#f3f2f2;border-top:2px solid #dddbda;border-radius:0 0 4px 4px"></div>
  <div class="btn" style="left:480px;top:515px;width:73px;height:32px;line-height:30px">Cancel</div>
  <div class="btn" style="left:562px;top:515px;width:62px;height:32px;line-height:30px;background:#3a419d;border-color:#3a419d;color:#fff;letter-spacing:-0.46px">Save</div>
</div>
</body>
</html>
